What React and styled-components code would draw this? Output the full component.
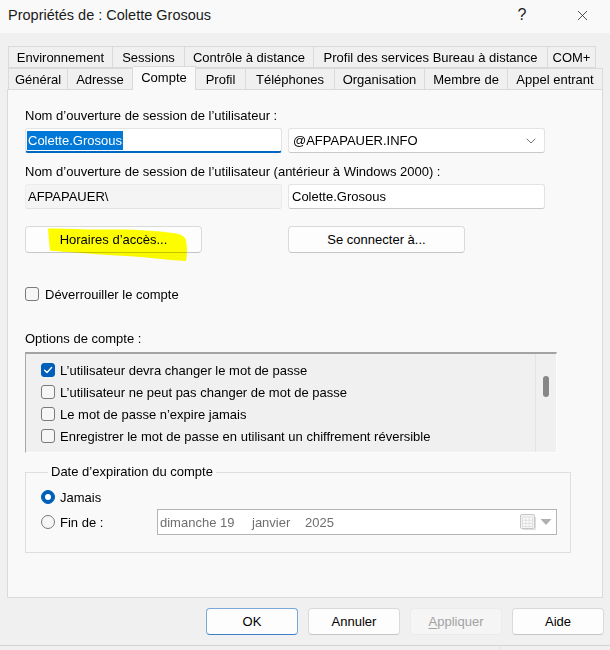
import React from "react";
import styled, { createGlobalStyle } from "styled-components";
import { ChevronDown, X } from "lucide-react";

const GlobalStyle = createGlobalStyle`
  html, body { margin: 0; padding: 0; background: #f0f0f0; }
  body {
    font-family: "Liberation Sans", Arial, sans-serif;
    font-size: 13px;
    color: #000;
  }
  * { box-sizing: border-box; }
`;

const Window = styled.div`
  width: 610px;
  height: 650px;
  background: #f0f0f0;
  display: flex;
  flex-direction: column;
  overflow: hidden;
`;

/* ---------- title bar ---------- */
const TitleBar = styled.div`
  height: 33px;
  display: flex;
  align-items: center;
  padding-left: 8px;
  background: #f9f9f9;
`;

const TitleText = styled.div`
  flex: 1;
  font-size: 14.5px;
  color: #1b1b1b;
  margin-top: -3px;
`;

const Controls = styled.div`
  display: flex;
  gap: 14px;
  padding-right: 5px;
  margin-top: -3px;
`;

const ControlButton = styled.div`
  width: 46px;
  height: 28px;
  display: flex;
  align-items: center;
  justify-content: center;
  font-size: 16px;
  color: #222;
`;

/* ---------- tabs ---------- */
const TabStrip = styled.div`
  margin-top: 13px;
  padding-left: 8px;
  display: flex;
  flex-direction: column;
  position: relative;
  z-index: 2;
`;

const TabRow = styled.div`
  display: flex;
  height: ${(p) => p.$h}px;
`;

const Tab = styled.div`
  width: ${(p) => p.$w}px;
  height: 100%;
  display: flex;
  align-items: center;
  justify-content: center;
  white-space: nowrap;
  font-size: 13px;
  background: #f0f0f0;
  border: 1px solid #dadada;
  border-left-width: 0;
  border-bottom-width: ${(p) => (p.$front ? 0 : 1)}px;
  &:first-child { border-left-width: 1px; }
`;

const ActiveTab = styled(Tab)`
  height: 24px;
  margin-top: -2px;
  align-items: flex-start;
  padding-top: 3px;
  background: #f9f9f9;
  border-left-width: 0;
  border-bottom-width: 0;
`;

/* ---------- tab page ---------- */
const Panel = styled.div`
  margin: 0 7px 0 7px;
  height: 509px;
  background: #f9f9f9;
  border: 1px solid #dadada;
  padding-left: 17px;
  display: flex;
  flex-direction: column;
  position: relative;
  z-index: 1;
`;

const Label = styled.div`
  line-height: 16px;
  margin-top: ${(p) => p.$mt}px;
  white-space: nowrap;
`;

const FieldRow = styled.div`
  display: flex;
  gap: 6px;
  margin-top: 4px;
`;

const TextBox = styled.div`
  width: 257px;
  height: 25px;
  display: flex;
  align-items: center;
  padding-left: ${(p) => p.$pl ?? 4}px;
  background: ${(p) => (p.$readOnly ? "#f4f4f4" : "#ffffff")};
  border: 1px solid ${(p) => (p.$readOnly ? "#ececec" : "#e3e3e3")};
  border-bottom: ${(p) =>
    p.$focused ? "2px solid #0067c0" : p.$readOnly ? "1px solid #e2e2e2" : "1px solid #c9c9c9"};
  border-radius: 3px;
  white-space: nowrap;
  position: relative;
`;

const Selected = styled.span`
  display: inline-block;
  line-height: 19px;
  padding: 0 1px;
  background: #0078d7;
  color: #fff;
`;

const ComboArrow = styled.div`
  position: absolute;
  right: 5px;
  top: 4px;
  display: flex;
  color: #606060;
`;

const ButtonRow = styled.div`
  display: flex;
  gap: 86px;
  margin-top: 17px;
`;

const PushButton = styled.div`
  position: relative;
  width: ${(p) => p.$w}px;
  height: 27px;
  display: flex;
  align-items: center;
  justify-content: center;
  background: ${(p) => (p.$disabled ? "#f5f5f5" : "#fdfdfd")};
  color: ${(p) => (p.$disabled ? "#a2a2a2" : "#000")};
  border: 1px solid ${(p) => (p.$primary ? "#7aa7d8" : p.$disabled ? "#ebebeb" : "#dadada")};
  border-bottom-color: ${(p) => (p.$primary ? "#3f7fc8" : p.$disabled ? "#ebebeb" : "#c5c5c5")};
  border-radius: 4px;
  white-space: nowrap;
`;

const Highlighter = styled.svg`
  position: absolute;
  left: 0;
  top: 0;
  width: 180px;
  height: 40px;
  mix-blend-mode: multiply;
  pointer-events: none;
`;

const CheckRow = styled.div`
  display: flex;
  align-items: center;
  gap: ${(p) => p.$gap ?? 6}px;
  height: ${(p) => p.$h ?? 16}px;
  margin-top: ${(p) => p.$mt ?? 0}px;
  white-space: nowrap;
`;

const Box = styled.span`
  width: 14px;
  height: 14px;
  flex: none;
  border-radius: 3px;
  display: flex;
  align-items: center;
  justify-content: center;
  background: ${(p) => (p.$checked ? "#005fb8" : "#f6f6f6")};
  border: 1px solid ${(p) => (p.$checked ? "#005fb8" : "#7a7a7a")};
`;

const ListBox = styled.div`
  width: 532px;
  height: 101px;
  margin-top: 5px;
  display: flex;
  background: #f0f0f0;
  border-top: 2px solid #a3a3a3;
  border-left: 1px solid #a8a8a8;
  border-right: 1px solid #fdfdfd;
  border-bottom: 1px solid #fdfdfd;
`;

const ListItems = styled.div`
  flex: 1;
  padding: 5px 0 0 15px;
  display: flex;
  flex-direction: column;
`;

const ScrollTrack = styled.div`
  width: 21px;
  border-left: 1px solid #e4e4e4;
  display: flex;
  justify-content: center;
`;

const ScrollThumb = styled.div`
  width: 6px;
  height: 21px;
  margin-top: 22px;
  border-radius: 3px;
  background: #878787;
`;

const GroupBox = styled.fieldset`
  width: 546px;
  height: 89px;
  margin: 11px 0 0 0;
  padding: 9px 0 0 15px;
  border: 1px solid #dedede;
  min-width: 0;
`;

const Legend = styled.legend`
  margin-left: 7px;
  padding: 0 3px;
  line-height: 16px;
  font-size: 13px;
`;

const Radio = styled.span`
  width: 14px;
  height: 14px;
  flex: none;
  border-radius: 50%;
  display: flex;
  align-items: center;
  justify-content: center;
  background: ${(p) => (p.$checked ? "#005fb8" : "#f6f6f6")};
  border: 1px solid ${(p) => (p.$checked ? "#005fb8" : "#7a7a7a")};
  &::after {
    content: "";
    display: ${(p) => (p.$checked ? "block" : "none")};
    width: 6px;
    height: 6px;
    border-radius: 50%;
    background: #fff;
  }
`;

const RadioLabel = styled.div`
  width: 116px;
  display: flex;
  align-items: center;
  gap: 5px;
`;

const DatePicker = styled.div`
  width: 400px;
  height: 26px;
  display: flex;
  align-items: center;
  padding-left: 2px;
  background: #fff;
  border: 1px solid #b5b5b5;
  color: #6e6e6e;
  white-space: nowrap;
`;

const DatePart = styled.span`
  width: ${(p) => (p.$w ? `${p.$w}px` : "auto")};
`;

const PickerIcons = styled.div`
  margin-left: auto;
  display: flex;
  align-items: center;
  gap: 3px;
  padding-right: 4px;
`;

/* ---------- dialog buttons ---------- */
const DialogButtons = styled.div`
  display: flex;
  justify-content: flex-end;
  gap: 10px;
  padding-right: 6px;
  margin-top: 10px;
`;

const Underlined = styled.span`
  text-decoration: underline;
  text-underline-offset: 2px;
`;

const Footer = styled.div`
  margin-top: 10px;
  flex: 1;
  border-top: 1px solid #d3d3d3;
  position: relative;
  &::after {
    content: "";
    position: absolute;
    left: 500px;
    top: 0;
    bottom: 0;
    border-left: 1px solid #e2e2e2;
  }
`;

const Tick = () => (
  <svg width="12" height="12" viewBox="0 0 12 12">
    <path d="M2.6 6.2 L5 8.5 L9.6 3.6" fill="none" stroke="#fff" strokeWidth="1.4" strokeLinecap="round" strokeLinejoin="round" />
  </svg>
);

const CheckBox = ({ checked }) => <Box $checked={checked}>{checked && <Tick />}</Box>;

const CalendarIcon = () => (
  <svg width="18" height="18" viewBox="0 0 18 18">
    <rect x="1.5" y="1.5" width="14" height="14" rx="1.5" fill="#f4f4f4" stroke="#c6c6c6" />
    <rect x="3.5" y="4" width="10" height="9.5" fill="#fbfbfb" stroke="#dadada" strokeWidth="0.8" />
    <path d="M3.5 7.2 H13.5 M3.5 10.4 H13.5 M6.8 4 V13.5 M10.2 4 V13.5" stroke="#dadada" strokeWidth="0.8" />
    <path d="M16.5 4 V16.5 H4" fill="none" stroke="#dedede" strokeWidth="1" />
  </svg>
);

const DropTriangle = () => (
  <svg width="12" height="8" viewBox="0 0 12 8">
    <path d="M0.5 1 H11.5 L6 7 Z" fill="#b0b0b0" />
  </svg>
);

const rowOne = [
  ["Environnement", 105],
  ["Sessions", 72],
  ["Contrôle à distance", 129],
  ["Profil des services Bureau à distance", 234],
  ["COM+", 48],
];

const rowTwo = [
  ["Général", 60],
  ["Adresse", 65],
  ["Compte", 63, true],
  ["Profil", 50],
  ["Téléphones", 89],
  ["Organisation", 90],
  ["Membre de", 83],
  ["Appel entrant", 95],
];

const accountOptions = [
  ["L’utilisateur devra changer le mot de passe", true],
  ["L’utilisateur ne peut pas changer de mot de passe", false],
  ["Le mot de passe n’expire jamais", false],
  ["Enregistrer le mot de passe en utilisant un chiffrement réversible", false],
];

export default function App() {
  return (
    <>
      <GlobalStyle />
      <Window>
        <TitleBar>
          <TitleText>Propriétés de : Colette Grosous</TitleText>
          <Controls>
            <ControlButton>?</ControlButton>
            <ControlButton>
              <X size={17} strokeWidth={1.1} />
            </ControlButton>
          </Controls>
        </TitleBar>

        <TabStrip>
          <TabRow $h={22}>
            {rowOne.map(([label, w]) => (
              <Tab key={label} $w={w}>{label}</Tab>
            ))}
          </TabRow>
          <TabRow $h={21}>
            {rowTwo.map(([label, w, active]) =>
              active ? (
                <ActiveTab key={label} $w={w}>{label}</ActiveTab>
              ) : (
                <Tab key={label} $w={w} $front>{label}</Tab>
              )
            )}
          </TabRow>
        </TabStrip>

        <Panel>
          <Label $mt={18}>Nom d’ouverture de session de l’utilisateur :</Label>
          <FieldRow>
            <TextBox $focused $pl={1}>
              <Selected>Colette.Grosous</Selected>
            </TextBox>
            <TextBox $pl={4}>
              @AFPAPAUER.INFO
              <ComboArrow>
                <ChevronDown size={16} strokeWidth={1.3} />
              </ComboArrow>
            </TextBox>
          </FieldRow>

          <Label $mt={11}>Nom d’ouverture de session de l’utilisateur (antérieur à Windows 2000) :</Label>
          <FieldRow>
            <TextBox $readOnly $pl={2}>AFPAPAUER\</TextBox>
            <TextBox $pl={3}>Colette.Grosous</TextBox>
          </FieldRow>

          <ButtonRow>
            <PushButton $w={177}>
              Horaires d’accès...
              <Highlighter viewBox="0 0 180 40">
                <path
                  d="M22 1.5 C40 1 58 3 80 2.5 C110 2 135 4 150 6.5 C156 7.5 159 10 160 13 L161 21 C161 27 160.5 31 160 34 C140 33 120 30 100 29 C80 28 60 26.5 42 25 C35 24.5 28 24 24 23.5 L23 14 Z"
                  fill="#ffff00"
                />
              </Highlighter>
            </PushButton>
            <PushButton $w={177}>Se connecter à...</PushButton>
          </ButtonRow>

          <CheckRow $mt={33}>
            <CheckBox checked={false} />
            Déverrouiller le compte
          </CheckRow>

          <Label $mt={29}>Options de compte :</Label>
          <ListBox>
            <ListItems>
              {accountOptions.map(([text, checked]) => (
                <CheckRow key={text} $h={22} $gap={5}>
                  <CheckBox checked={checked} />
                  {text}
                </CheckRow>
              ))}
            </ListItems>
            <ScrollTrack>
              <ScrollThumb />
            </ScrollTrack>
          </ListBox>

          <GroupBox>
            <Legend>Date d’expiration du compte</Legend>
            <CheckRow>
              <RadioLabel>
                <Radio $checked />
                Jamais
              </RadioLabel>
            </CheckRow>
            <CheckRow $h={26} $mt={4} $gap={0}>
              <RadioLabel>
                <Radio />
                Fin de :
              </RadioLabel>
              <DatePicker>
                <DatePart $w={92}>dimanche 19</DatePart>
                <DatePart $w={53}>janvier</DatePart>
                <DatePart>2025</DatePart>
                <PickerIcons>
                  <CalendarIcon />
                  <DropTriangle />
                </PickerIcons>
              </DatePicker>
            </CheckRow>
          </GroupBox>
        </Panel>

        <DialogButtons>
          <PushButton $w={92} $primary>OK</PushButton>
          <PushButton $w={92}>Annuler</PushButton>
          <PushButton $w={92} $disabled>
            <span><Underlined>A</Underlined>ppliquer</span>
          </PushButton>
          <PushButton $w={92}>Aide</PushButton>
        </DialogButtons>
        <Footer />
      </Window>
    </>
  );
}
